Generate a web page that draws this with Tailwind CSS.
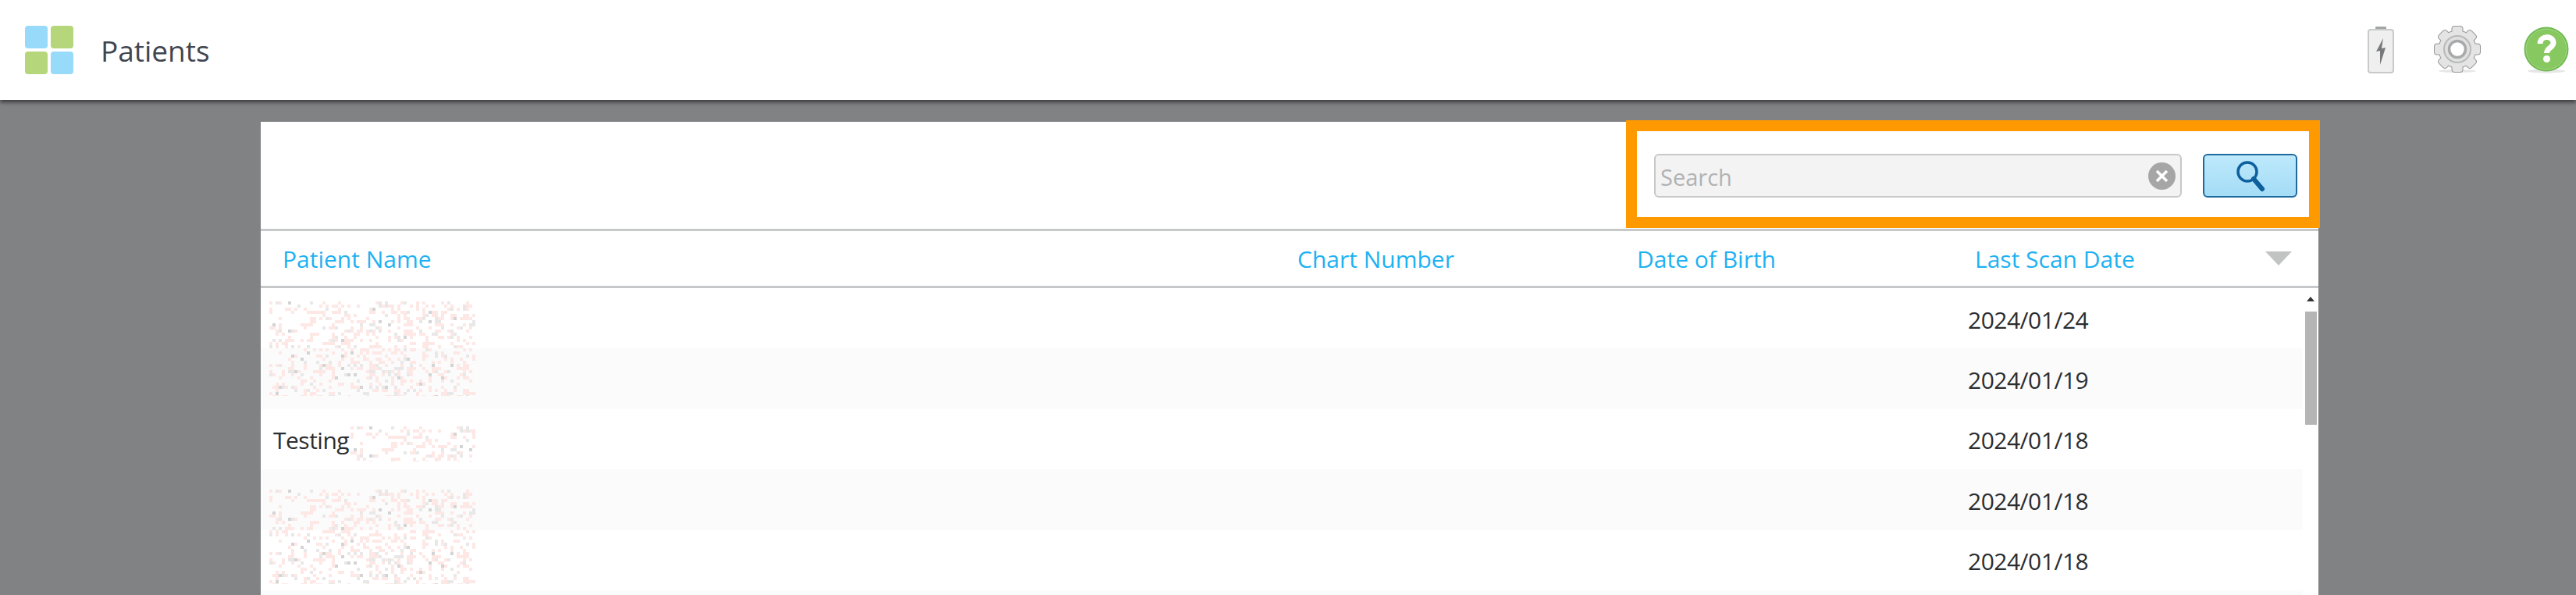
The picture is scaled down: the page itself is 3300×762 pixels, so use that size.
<!DOCTYPE html>
<html lang="en">
<head>
  <meta charset="UTF-8" />
  <title>Patients</title>
  <script src="https://cdn.jsdelivr.net/npm/@tailwindcss/browser@4"></script>
</head>
<body class="bg-[#818283] font-['Open_Sans',sans-serif] overflow-hidden">

<div class="relative h-[762px] w-[3300px] overflow-hidden">
  <!-- Top bar -->
  <header class="relative z-10 flex h-[128px] items-center bg-white shadow-[0_3px_5px_rgba(40,40,42,0.8)]">
    <div class="ml-[32px] grid grid-cols-[29px_29px] gap-[4px]">
      <div class="h-[29px] rounded-[4px] bg-[#98dafa]"></div>
      <div class="h-[29px] rounded-[4px] bg-[#b5d67a]"></div>
      <div class="h-[29px] rounded-[4px] bg-[#b5d67a]"></div>
      <div class="h-[29px] rounded-[4px] bg-[#98dafa]"></div>
    </div>
    <h1 class="ml-[35px] text-[37px] leading-none text-[#3f4650]">Patients</h1>

    <div class="ml-auto mr-[9px] flex items-center">
      <!-- Battery -->
      <svg width="34" height="60" viewBox="0 0 34 60" class="mr-[51px]">
        <rect x="10" y="0" width="14" height="4" rx="1" fill="#a4a6a6"/>
        <rect x="1" y="4" width="32" height="55" rx="3" fill="#efefef" stroke="#c8caca" stroke-width="2"/>
        <path d="M20 15 L11 32 L16 31 L16 49 L23 27 L18 28 Z" fill="#77797b"/>
      </svg>
      <!-- Settings -->
      <svg width="60" height="62" viewBox="-30 -30 60 62" class="mr-[55px]">
        <defs>
          <g id="gear">
            <circle r="23.5"/>
            <rect x="-6.5" y="-29" width="13" height="12" rx="3"/>
            <rect x="-6.5" y="-29" width="13" height="12" rx="3" transform="rotate(45)"/>
            <rect x="-6.5" y="-29" width="13" height="12" rx="3" transform="rotate(90)"/>
            <rect x="-6.5" y="-29" width="13" height="12" rx="3" transform="rotate(135)"/>
            <rect x="-6.5" y="-29" width="13" height="12" rx="3" transform="rotate(180)"/>
            <rect x="-6.5" y="-29" width="13" height="12" rx="3" transform="rotate(225)"/>
            <rect x="-6.5" y="-29" width="13" height="12" rx="3" transform="rotate(270)"/>
            <rect x="-6.5" y="-29" width="13" height="12" rx="3" transform="rotate(315)"/>
          </g>
        </defs>
        <ellipse cx="0" cy="28" rx="24" ry="2" fill="#e6e6e6"/>
        <use href="#gear" fill="#98999a" stroke="#98999a" stroke-width="2"/>
        <use href="#gear" fill="#e4e4e4"/>
        <circle r="17" fill="#e0e0e0" stroke="#b8b9ba" stroke-width="2"/>
        <circle r="10.5" fill="#fff" stroke="#a8a9aa" stroke-width="3.5"/>
      </svg>
      <!-- Help -->
      <svg width="58" height="60" viewBox="0 0 58 60">
        <ellipse cx="29" cy="57" rx="24" ry="2.5" fill="#e6e6e6"/>
        <circle cx="29" cy="29" r="28.5" fill="#6fbb50"/>
        <circle cx="29" cy="29" r="26" fill="#88c860" stroke="#a9d98b" stroke-width="1"/>
        <path d="M21 22 C21 11 38 11 38 21 C38 27 29.500 27 29.500 34" fill="none" stroke="#fff" stroke-width="7"/>
        <circle cx="29.5" cy="41.500" r="4.500" fill="#fff"/>
      </svg>
    </div>
  </header>

  <!-- Card -->
  <main class="ml-[334px] mt-[28px] w-[2636px] bg-white">
    <div class="flex h-[140px] justify-end gap-[27px] border-b-[3px] border-[#c6c8ca] pr-[27px] pt-[41px]">
      <div class="flex h-[56px] w-[676px] items-center justify-between rounded-[6px] border-2 border-[#c8c8c8] bg-[#f3f3f3] pl-[6px] pr-[6px]">
        <span class="pt-[3px] text-[29px] text-[#b0b2b4]">Search</span>
        <svg width="35" height="35" viewBox="0 0 35 35">
          <circle cx="17.5" cy="17.5" r="17.5" fill="#a6a6a6"/>
          <path d="M11 11 L24 24 M24 11 L11 24" stroke="#fff" stroke-width="3.5"/>
        </svg>
      </div>
      <button class="flex h-[56px] w-[121px] items-center justify-center rounded-[6px] border-2 border-[#1f6a9c] bg-gradient-to-b from-[#bde9fc] to-[#a4dcf6]">
        <svg width="42" height="42" viewBox="0 0 42 42">
          <circle cx="17" cy="16" r="12" fill="none" stroke="#0d5f9e" stroke-width="3.5"/>
          <path d="M25 25 L36 38" stroke="#0d5f9e" stroke-width="6" stroke-linecap="round"/>
        </svg>
      </button>
    </div>

    <!-- Column headings -->
    <div class="flex h-[73px] items-center border-b-[3px] border-[#c6c8ca] pl-[28px] text-[30px] text-[#1db1f2]">
      <div class="w-[1300px]">Patient Name</div>
      <div class="w-[435px]">Chart Number</div>
      <div class="w-[433px]">Date of Birth</div>
      <div class="w-[372px]">Last Scan Date</div>
      <svg width="34" height="18" viewBox="0 0 34 18"><path d="M0 0 H34 L17 18 Z" fill="#c2c4c4"/></svg>
    </div>

    <!-- Rows -->
    <div class="flex h-[393px]">
      <div class="w-[2616px] text-[30px] tracking-[-0.5px] text-[#2b2d30]">
        <div class="flex h-[77.4px] items-center pl-[2187px] pt-[3px]">2024/01/24</div>
        <div class="flex h-[77.4px] items-center bg-[#fbfbfb] pl-[2187px] pt-[3px]">2024/01/19</div>
        <div class="flex h-[77.4px] items-center pl-[16px] pt-[3px]">
          <span class="w-[2171px]">Testing</span>2024/01/18
        </div>
        <div class="flex h-[77.4px] items-center bg-[#fbfbfb] pl-[2187px] pt-[3px]">2024/01/18</div>
        <div class="flex h-[77.4px] items-center pl-[2187px] pt-[3px]">2024/01/18</div>
        <div class="h-[6px] bg-[#fbfbfb]"></div>
      </div>
      <!-- Scrollbar -->
      <div class="flex w-[20px] flex-col items-center pt-[11px]">
        <div class="h-0 w-0 border-x-[5px] border-b-[6px] border-x-transparent border-b-[#333]"></div>
        <div class="mt-[13px] h-[145px] w-[15px] bg-[#b5b5b5]"></div>
      </div>
    </div>
  </main>

  <!-- Redacted names -->
  <svg id="blur1" width="264" height="121" class="absolute left-[345px] top-[386px] blur-[0.6px]"></svg>
  <svg id="blur2" width="160" height="45" class="absolute left-[449px] top-[546px] blur-[0.6px]"></svg>
  <svg id="blur3" width="264" height="121" class="absolute left-[345px] top-[627px] blur-[0.6px]"></svg>

  <!-- Highlight box -->
  <div class="absolute left-[2083px] top-[154px] h-[138px] w-[889px] border-[14px] border-[#ff9900]"></div>
</div>

<script>
  // same noise in every patch, like the pixelated names in the original
  function fillNoise(id, w, h) {
    var seed = 7, html = "";
    function rnd() { seed = (seed * 16807) % 2147483647; return seed / 2147483647; }
    for (var y = 0; y < 121; y += 4) {
      for (var x = 0; x < 264; x += 4) {
        var r = rnd();
        var c = r < 0.24 ? "#fde8e6" : r < 0.31 ? "#e8e8e8" : r < 0.33 ? "#d4d4d4" : null;
        if (c && x < w && y < h) html += '<rect x="' + x + '" y="' + y + '" width="4" height="4" fill="' + c + '"/>';
      }
    }
    document.getElementById(id).innerHTML = html;
  }
  fillNoise("blur1", 264, 121);
  fillNoise("blur2", 160, 45);
  fillNoise("blur3", 264, 121);
</script>

</body>
</html>
